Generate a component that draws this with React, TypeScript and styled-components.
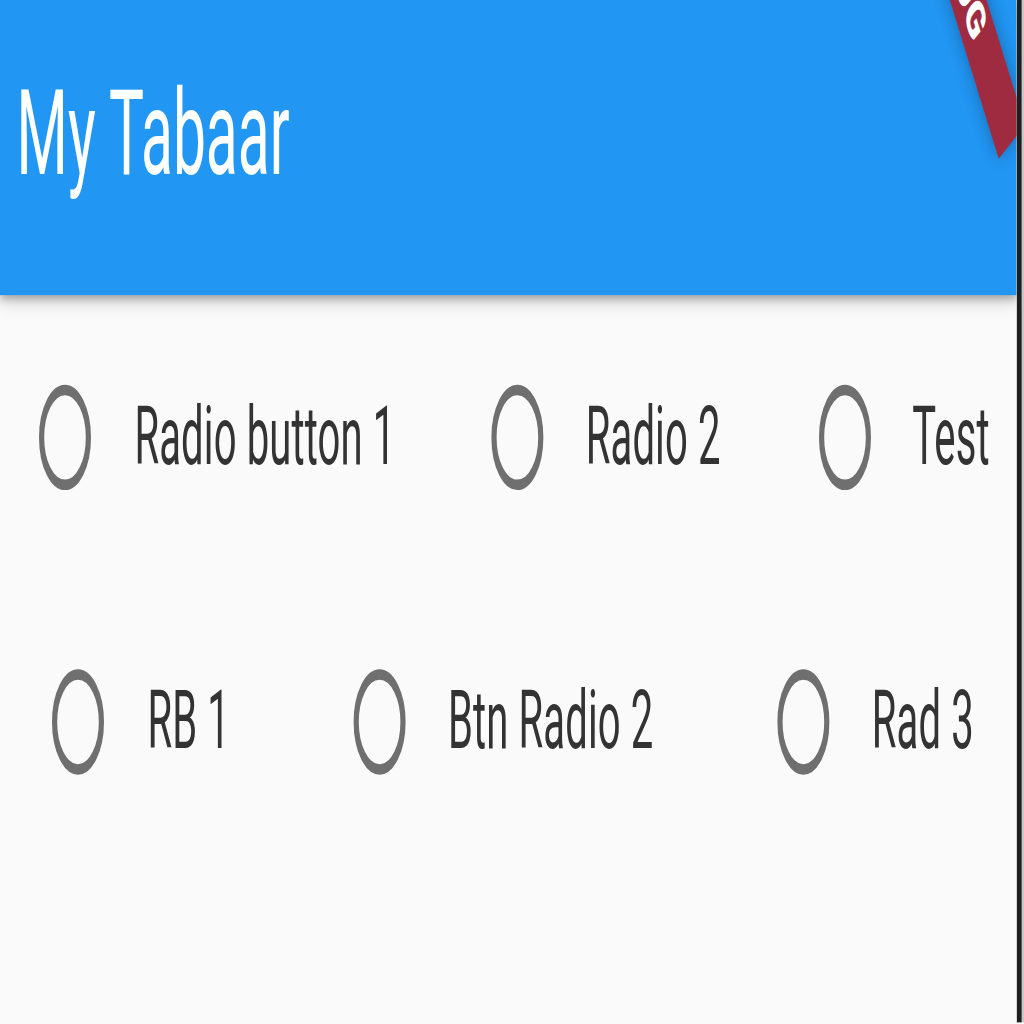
import React from "react";
import styled, { createGlobalStyle } from "styled-components";

const SX = 2.6;
const SY = 5.27;

const Global = createGlobalStyle`
  html, body {
    margin: 0;
    padding: 0;
    width: 1024px;
    height: 1024px;
    overflow: hidden;
    background: #fafafa;
  }
  #root {
    width: 1024px;
    height: 1024px;
  }
`;

const Viewport = styled.div`
  width: 1024px;
  height: 1024px;
  overflow: hidden;
  background: #fafafa;
`;

const Stage = styled.div`
  width: ${1024 / SX}px;
  height: ${1024 / SY}px;
  transform: scale(${SX}, ${SY});
  transform-origin: 0 0;
  display: flex;
`;

const Phone = styled.div`
  position: relative;
  width: 391.2px;
  flex: none;
  height: 100%;
  overflow: hidden;
  background: #fafafa;
  display: flex;
  flex-direction: column;
  font-family: Roboto, "Noto Sans", sans-serif;
`;

const Edge = styled.div`
  width: 1.5px;
  flex: none;
  background: #1e1e1e;
`;

const Outside = styled.div`
  flex: 1;
  background: #c8c8c8;
`;

const AppBar = styled.header`
  position: relative;
  z-index: 1;
  height: 56px;
  flex: none;
  box-sizing: border-box;
  padding: 15.1px 0 0 6.4px;
  background: #2196f3;
  box-shadow: 0 1px 2px rgba(0, 0, 0, 0.25), 0 2px 4px rgba(0, 0, 0, 0.12);
`;

const Title = styled.h1`
  margin: 0;
  font-family: Roboto, "Noto Sans", sans-serif;
  font-size: 22.6px;
  line-height: 22.6px;
  font-weight: 400;
  color: #ffffff;
`;

const Body = styled.main`
  display: flex;
  flex-direction: column;
  gap: 5.7px;
  padding-top: 2.9px;
`;

const Row = styled.div<{ $cols: string; $lead: number }>`
  display: grid;
  grid-template-columns: ${(p) => p.$cols};
  padding-left: ${(p) => p.$lead}px;
  height: 48px;
`;

const Item = styled.label`
  display: flex;
  align-items: center;
  height: 48px;
`;

const RadioBox = styled.span`
  width: 48px;
  height: 48px;
  flex: none;
  display: flex;
  align-items: center;
  justify-content: center;
`;

const Ring = styled.span`
  width: 20px;
  height: 20px;
  box-sizing: border-box;
  border: 2.3px solid #6f6f6f;
  border-radius: 50%;
`;

const Label = styled.span`
  margin-left: 2.3px;
  font-size: 15.4px;
  line-height: 20px;
  letter-spacing: 0.05px;
  color: #333333;
  white-space: nowrap;
`;

const Banner = styled.div`
  position: absolute;
  z-index: 2;
  left: ${367.9 - 40}px;
  top: ${-7 - 6}px;
  width: 80px;
  height: 12px;
  transform: rotate(58deg);
  background: rgba(180, 26, 34, 0.86);
  box-shadow: 0 0 4px rgba(0, 0, 0, 0.3);
  color: #ffffff;
  font-family: Roboto, "Noto Sans", sans-serif;
  font-size: 10.2px;
  font-weight: 900;
  line-height: 12px;
  text-align: center;
`;

type Opt = { label: string };

const RadioItem = ({ label }: Opt) => (
  <Item>
    <RadioBox>
      <Ring />
    </RadioBox>
    <Label>{label}</Label>
  </Item>
);

export default function App() {
  return (
    <>
      <Global />
      <Viewport>
        <Stage>
          <Phone>
            <AppBar>
              <Title>My Tabaar</Title>
            </AppBar>
            <Body>
              <Row $cols="173.6px 125.6px 1fr" $lead={1.4}>
                <RadioItem label="Radio button 1" />
                <RadioItem label="Radio 2" />
                <RadioItem label="Test" />
              </Row>
              <Row $cols="115.6px 163px 1fr" $lead={6.4}>
                <RadioItem label="RB 1" />
                <RadioItem label="Btn Radio 2" />
                <RadioItem label="Rad 3" />
              </Row>
            </Body>
            <Banner>DEBUG</Banner>
          </Phone>
          <Edge />
          <Outside />
        </Stage>
      </Viewport>
    </>
  );
}
